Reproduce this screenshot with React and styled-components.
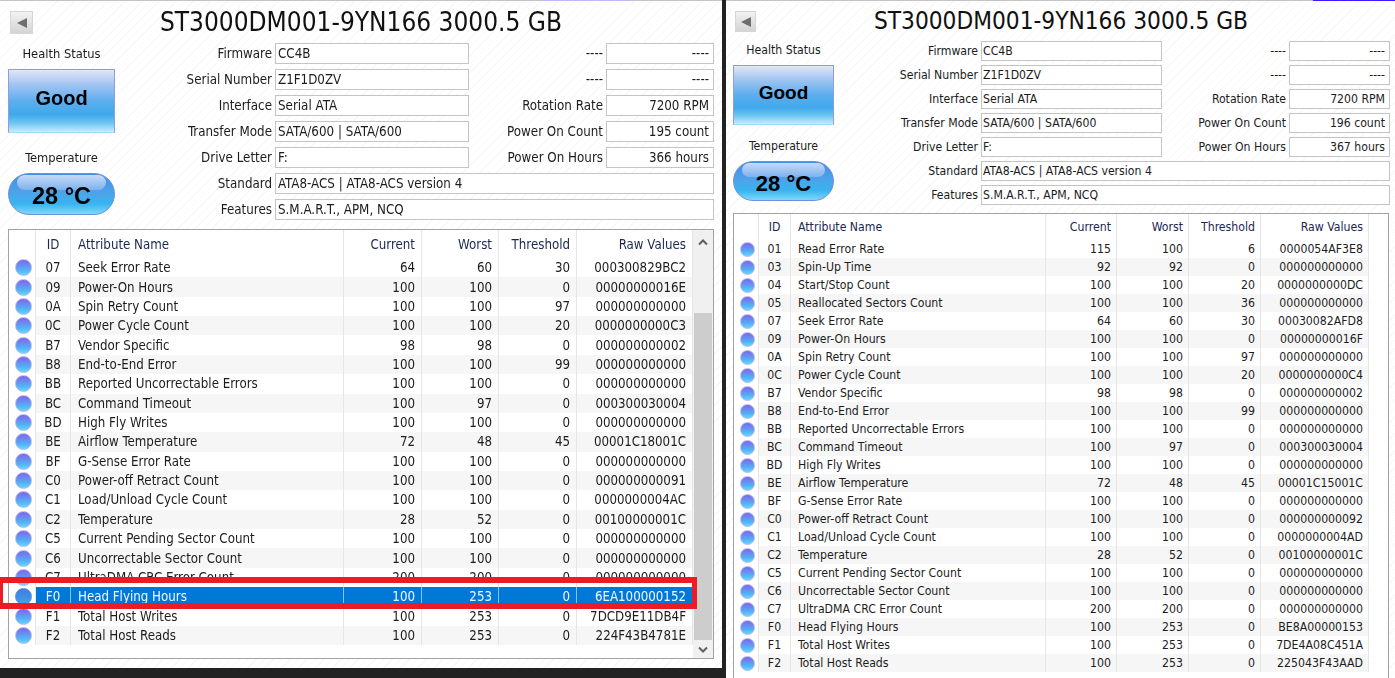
import React from "react";
import styled, { createGlobalStyle, ThemeProvider } from "styled-components";

const Global = createGlobalStyle`
  html, body { margin: 0; padding: 0; background: #222; overflow: hidden; }
  #root { width: 1395px; height: 678px; }
`;

const leftTheme = {
  width: "722px", height: "668px", pad: "8px", font: "13.2px", infoFont: "13.25px", sideFont: "12.8px", titleFont: "26px", titleLine: "22px", titleShift: "-25px",
  headTop: "10px", btn: "23px", headH: "32px", sideW: "107px", labelW: "160px", boxW: "194px",
  label2W: "137px", box2W: "108px", rowBox: "21px", rowGap: "5px", healthH: "64px", pillH: "42px",
  healthLabelH: "26px", tempGap: "14px", statusFont: "20px", tempFont: "23.5px", tableTop: "9px", tableH: "430px",
  cols: "27px 35px 273px 78px 77px 78px 116px", headerH: "28px", rowH: "19.37px", dot: "17px", cellPad: "6px",
  boxPadLeft: "2px", tableW: "706px", scrollW: "20px", soften: "blur(0.3px)",
};
const rightTheme = {
  ...leftTheme,
  width: "669px", height: "678px", pad: "7px", font: "12.2px", infoFont: "12.15px", sideFont: "12.2px", titleFont: "24.2px", titleLine: "20px", titleShift: "-22px",
  btn: "21px", headH: "30px", sideW: "101px", labelW: "147px", boxW: "181px",
  label2W: "127px", box2W: "101px", rowBox: "20px", rowGap: "4px", healthH: "60px", pillH: "40px",
  healthLabelH: "24px", tempGap: "12px", statusFont: "19px", tempFont: "22px", tableTop: "8px", tableH: "480px",
  cols: "25px 32px 255px 71px 72px 72px 108px", headerH: "26px", rowH: "18px", dot: "15px", cellPad: "5px",
  boxPadLeft: "1px", tableW: "656px", scrollW: "19px", soften: "none",
};

const Page = styled.div`
  display: flex;
  gap: 4px;
  align-items: flex-start;
  width: 1395px;
  height: 678px;
  overflow: hidden;
  font-family: "DejaVu Sans Condensed", "DejaVu Sans", sans-serif;
  font-stretch: condensed;
  color: #1c1c1c;
`;

const Pane = styled.section`
  position: relative;
  flex: none;
  box-sizing: border-box;
  width: ${(p) => p.theme.width};
  height: ${(p) => p.theme.height};
  padding: 0 ${(p) => p.theme.pad};
  overflow: hidden;
  filter: ${(p) => p.theme.soften};
  background-color: #fff;
  background-image: repeating-linear-gradient(135deg, #fff 0, #fff 5px, #f8f8f8 5px, #f8f8f8 6px);
`;

const TopEdge = styled.div`
  height: 1px;
  margin: 0 -${(p) => p.theme.pad};
  background: #c4c4c4;
`;

const EdgeMark = styled.div`
  width: ${(p) => p.$w}px;
  height: 1px;
  margin-left: ${(p) => p.$x}px;
  background: ${(p) => p.$c};
`;

const Header = styled.header`
  display: flex;
  align-items: flex-start;
  height: ${(p) => p.theme.headH};
  margin-top: ${(p) => p.theme.headTop};
`;

const BackButton = styled.div`
  flex: none;
  display: flex;
  align-items: center;
  justify-content: center;
  box-sizing: border-box;
  width: ${(p) => p.theme.btn};
  height: ${(p) => p.theme.btn};
  margin-left: 2px;
  border: 1px solid #d6d6d6;
  background: linear-gradient(#f2f2f2, #d4d4d4);
  &::before {
    content: "";
    border-style: solid;
    border-width: 5px 10px 5px 0;
    border-color: transparent #6e6e6e transparent transparent;
  }
`;

const Title = styled.h1`
  flex: 1;
  margin: 0 0 0 ${(p) => p.theme.titleShift};
  text-align: center;
  font-weight: 400;
  font-size: ${(p) => p.theme.titleFont};
  line-height: ${(p) => p.theme.titleLine};
  white-space: nowrap;
  color: #111;
`;

const Summary = styled.div`
  display: flex;
`;

const Side = styled.div`
  flex: none;
  width: ${(p) => p.theme.sideW};
  display: flex;
  flex-direction: column;
  align-items: stretch;
`;

const SideLabel = styled.div`
  box-sizing: border-box;
  height: ${(p) => p.theme.healthLabelH};
  margin-top: ${(p) => p.$top || 0};
  padding-bottom: 6px;
  display: flex;
  align-items: center;
  justify-content: center;
  font-size: ${(p) => p.theme.sideFont};
`;

const HealthBox = styled.div`
  box-sizing: border-box;
  height: ${(p) => p.theme.healthH};
  padding-bottom: 5px;
  display: flex;
  align-items: center;
  justify-content: center;
  border: 1px solid #8f9ed8;
  border-bottom-color: #9fdcf6;
  font-family: "Liberation Sans", sans-serif;
  font-stretch: normal;
  font-weight: 700;
  font-size: ${(p) => p.theme.statusFont};
  color: #000;
  background: linear-gradient(#e2e6f8 0%, #a6c6f2 22%, #5caeee 50%, #3fa8ec 72%, #6cc4f2 85%, #c8ecfb 100%);
`;

const TempPill = styled.div`
  box-sizing: border-box;
  position: relative;
  overflow: hidden;
  height: ${(p) => p.theme.pillH};
  padding-top: 5px;
  display: flex;
  align-items: center;
  justify-content: center;
  border: 1px solid #6f90d8;
  border-radius: 21px;
  font-family: "Liberation Sans", sans-serif;
  font-stretch: normal;
  font-weight: 700;
  font-size: ${(p) => p.theme.tempFont};
  color: #000;
  background: linear-gradient(#3f8fe6 0%, #4ea2ea 45%, #38b4f0 75%, #7fd8fa 100%);
  &::before {
    content: "";
    position: absolute;
    top: 1px;
    left: 8px;
    right: 8px;
    height: 38%;
    border-radius: 14px;
    background: linear-gradient(#c6daf6, #7db2ee);
  }
  & > span { position: relative; }
`;

const Info = styled.div`
  flex: 1;
  display: flex;
  flex-direction: column;
  gap: ${(p) => p.theme.rowGap};
`;

const InfoRow = styled.div`
  display: flex;
  height: ${(p) => p.theme.rowBox};
`;

const InfoLabel = styled.div`
  flex: none;
  box-sizing: border-box;
  width: ${(p) => (p.$second ? p.theme.label2W : p.theme.labelW)};
  padding-right: 3px;
  text-align: right;
  font-size: ${(p) => p.theme.infoFont};
  line-height: ${(p) => p.theme.rowBox};
  white-space: nowrap;
`;

const InfoBox = styled.div`
  box-sizing: border-box;
  flex: ${(p) => (p.$wide ? "1" : "none")};
  width: ${(p) => (p.$wide ? "auto" : p.$second ? p.theme.box2W : p.theme.boxW)};
  padding: 0 4px 0 ${(p) => p.theme.boxPadLeft};
  border: 1px solid #c4c4c4;
  background: #fff;
  font-size: ${(p) => p.theme.infoFont};
  line-height: ${(p) => `calc(${p.theme.rowBox} - 2px)`};
  text-align: ${(p) => (p.$second ? "right" : "left")};
  white-space: nowrap;
`;

const Table = styled.div`
  box-sizing: border-box;
  display: flex;
  width: ${(p) => p.theme.tableW};
  height: ${(p) => p.theme.tableH};
  margin-top: ${(p) => p.theme.tableTop};
  border: 1px solid #a2a2a2;
  background: #fff;
  font-size: ${(p) => p.theme.font};
`;

const TableBody = styled.div`
  flex: 1;
  min-width: 0;
`;

const Row = styled.div`
  display: grid;
  grid-template-columns: ${(p) => p.theme.cols};
  height: ${(p) => (p.$header ? p.theme.headerH : p.theme.rowH)};
  white-space: nowrap;
`;

const Cell = styled.div`
  box-sizing: border-box;
  display: flex;
  align-items: center;
  padding: 0 ${(p) => p.theme.cellPad};
  overflow: hidden;
  justify-content: ${(p) => (p.$align === "center" ? "center" : p.$align === "left" ? "flex-start" : "flex-end")};
  padding-left: ${(p) => (p.$align === "left" ? "7px" : undefined)};
  border-right: 1px solid ${(p) => (p.$selected ? "#8fc0ea" : "#e6e6e6")};
  background: ${(p) => (p.$selected ? "#0078d7" : p.$alt ? "#f6f6f6" : "#fff")};
  color: ${(p) => (p.$selected ? "#f2f8fd" : p.$header ? "#1b2750" : "#1c1c1c")};
`;

const IconCell = styled.div`
  display: flex;
  align-items: center;
  justify-content: center;
  box-sizing: border-box;
  padding-left: 2px;
  border-right: 1px solid #e6e6e6;
  background: #fff;
`;

const Dot = styled.span`
  box-sizing: border-box;
  width: ${(p) => p.theme.dot};
  height: ${(p) => p.theme.dot};
  border-radius: 50%;
  border: 1px solid ${(p) => (p.$selected ? "#5a8ce0" : "#bdb4ee")};
  background: ${(p) =>
    p.$selected
      ? "linear-gradient(#3f7fe0, #3f8fe6 55%, #3fa8ee)"
      : "linear-gradient(#7a68ea 0%, #6a8cf0 35%, #52b0f6 65%, #62d8fb 100%)"};
`;

const Scrollbar = styled.div`
  flex: none;
  width: ${(p) => p.theme.scrollW};
  display: flex;
  flex-direction: column;
  background: #f0f0f0;
`;

const Arrow = styled.div`
  flex: none;
  height: ${(p) => p.$h}px;
  display: flex;
  align-items: center;
  justify-content: center;
  color: #606060;
`;

const ScrollGap = styled.div`
  height: ${(p) => p.$h}px;
`;

const Thumb = styled.div`
  flex: 1;
  margin: 0 1px;
  background: #cdcdcd;
`;

const ScrollSpace = styled.div`
  flex: none;
  width: ${(p) => p.theme.scrollW};
  background: #fff;
`;

const Highlight = styled.div`
  position: absolute;
  left: 0;
  top: 577px;
  width: 697px;
  height: 32px;
  box-sizing: border-box;
  border-style: solid;
  border-color: #ed1c24;
  border-width: 6px 5px 6px 3px;
  pointer-events: none;
`;

const Chevron = ({ down }) => (
  <svg width="10" height="7" viewBox="0 0 10 7">
    <path d={down ? "M1 1.5 L5 5.5 L9 1.5" : "M1 5.5 L5 1.5 L9 5.5"} fill="none" stroke="currentColor" strokeWidth="2" />
  </svg>
);

const cols = ["ID", "Attribute Name", "Current", "Worst", "Threshold", "Raw Values"];

const parse = (s) => s.trim().split("\n").map((l) => l.split("|"));

const leftRows = parse(`
07|Seek Error Rate|64|60|30|000300829BC2
09|Power-On Hours|100|100|0|00000000016E
0A|Spin Retry Count|100|100|97|000000000000
0C|Power Cycle Count|100|100|20|0000000000C3
B7|Vendor Specific|98|98|0|000000000002
B8|End-to-End Error|100|100|99|000000000000
BB|Reported Uncorrectable Errors|100|100|0|000000000000
BC|Command Timeout|100|97|0|000300030004
BD|High Fly Writes|100|100|0|000000000000
BE|Airflow Temperature|72|48|45|00001C18001C
BF|G-Sense Error Rate|100|100|0|000000000000
C0|Power-off Retract Count|100|100|0|000000000091
C1|Load/Unload Cycle Count|100|100|0|0000000004AC
C2|Temperature|28|52|0|00100000001C
C5|Current Pending Sector Count|100|100|0|000000000000
C6|Uncorrectable Sector Count|100|100|0|000000000000
C7|UltraDMA CRC Error Count|200|200|0|000000000000
F0|Head Flying Hours|100|253|0|6EA100000152
F1|Total Host Writes|100|253|0|7DCD9E11DB4F
F2|Total Host Reads|100|253|0|224F43B4781E
`);

const rightRows = parse(`
01|Read Error Rate|115|100|6|0000054AF3E8
03|Spin-Up Time|92|92|0|000000000000
04|Start/Stop Count|100|100|20|0000000000DC
05|Reallocated Sectors Count|100|100|36|000000000000
07|Seek Error Rate|64|60|30|00030082AFD8
09|Power-On Hours|100|100|0|00000000016F
0A|Spin Retry Count|100|100|97|000000000000
0C|Power Cycle Count|100|100|20|0000000000C4
B7|Vendor Specific|98|98|0|000000000002
B8|End-to-End Error|100|100|99|000000000000
BB|Reported Uncorrectable Errors|100|100|0|000000000000
BC|Command Timeout|100|97|0|000300030004
BD|High Fly Writes|100|100|0|000000000000
BE|Airflow Temperature|72|48|45|00001C15001C
BF|G-Sense Error Rate|100|100|0|000000000000
C0|Power-off Retract Count|100|100|0|000000000092
C1|Load/Unload Cycle Count|100|100|0|0000000004AD
C2|Temperature|28|52|0|00100000001C
C5|Current Pending Sector Count|100|100|0|000000000000
C6|Uncorrectable Sector Count|100|100|0|000000000000
C7|UltraDMA CRC Error Count|200|200|0|000000000000
F0|Head Flying Hours|100|253|0|BE8A00000153
F1|Total Host Writes|100|253|0|7DE4A08C451A
F2|Total Host Reads|100|253|0|225043F43AAD
`);

const alignOf = (i) => (i === 0 ? "center" : i === 1 ? "left" : "right");

const Smart = ({ rows, selected, count, hours, scroll, mark, showHighlight, theme }) => (
  <ThemeProvider theme={theme}>
    <Pane>
      <TopEdge><EdgeMark $x={mark.x} $w={mark.w} $c={mark.c} /></TopEdge>
      <Header>
        <BackButton />
        <Title>ST3000DM001-9YN166 3000.5 GB</Title>
      </Header>
      <Summary>
        <Side>
          <SideLabel>Health Status</SideLabel>
          <HealthBox>Good</HealthBox>
          <SideLabel $top={theme.tempGap}>Temperature</SideLabel>
          <TempPill><span>28 °C</span></TempPill>
        </Side>
        <Info>
          {[
            ["Firmware", "CC4B", "----", "----"],
            ["Serial Number", "Z1F1D0ZV", "----", "----"],
            ["Interface", "Serial ATA", "Rotation Rate", "7200 RPM"],
            ["Transfer Mode", "SATA/600 | SATA/600", "Power On Count", count],
            ["Drive Letter", "F:", "Power On Hours", hours],
          ].map(([a, b, c, d]) => (
            <InfoRow key={a}>
              <InfoLabel>{a}</InfoLabel>
              <InfoBox>{b}</InfoBox>
              <InfoLabel $second>{c}</InfoLabel>
              <InfoBox $second>{d}</InfoBox>
            </InfoRow>
          ))}
          <InfoRow>
            <InfoLabel>Standard</InfoLabel>
            <InfoBox $wide>ATA8-ACS | ATA8-ACS version 4</InfoBox>
          </InfoRow>
          <InfoRow>
            <InfoLabel>Features</InfoLabel>
            <InfoBox $wide>S.M.A.R.T., APM, NCQ</InfoBox>
          </InfoRow>
        </Info>
      </Summary>
      <Table>
        <TableBody>
          <Row $header>
            <IconCell />
            {cols.map((c, i) => (
              <Cell key={c} $align={alignOf(i)} $header>{c}</Cell>
            ))}
          </Row>
          {rows.map((r, n) => (
            <Row key={r[0]}>
              <IconCell><Dot $selected={r[0] === selected} /></IconCell>
              {r.map((v, i) => (
                <Cell key={i} $align={alignOf(i)} $alt={n % 2 === 1} $selected={r[0] === selected}>{v}</Cell>
              ))}
            </Row>
          ))}
        </TableBody>
        {scroll ? (
          <Scrollbar>
            <Arrow $h={24}><Chevron /></Arrow>
            <ScrollGap $h={59} />
            <Thumb />
            <Arrow $h={18}><Chevron down /></Arrow>
          </Scrollbar>
        ) : (
          <ScrollSpace />
        )}
      </Table>
      {showHighlight && <Highlight />}
    </Pane>
  </ThemeProvider>
);

export default function App() {
  return (
    <>
      <Global />
      <Page>
        <Smart theme={leftTheme} rows={leftRows} selected="F0" count="195 count" hours="366 hours" scroll showHighlight mark={{ x: 542, w: 90, c: "#c4b8f4" }} />
        <Smart theme={rightTheme} rows={rightRows} count="196 count" hours="367 hours" mark={{ x: 587, w: 82, c: "#3a1cff" }} />
      </Page>
    </>
  );
}
